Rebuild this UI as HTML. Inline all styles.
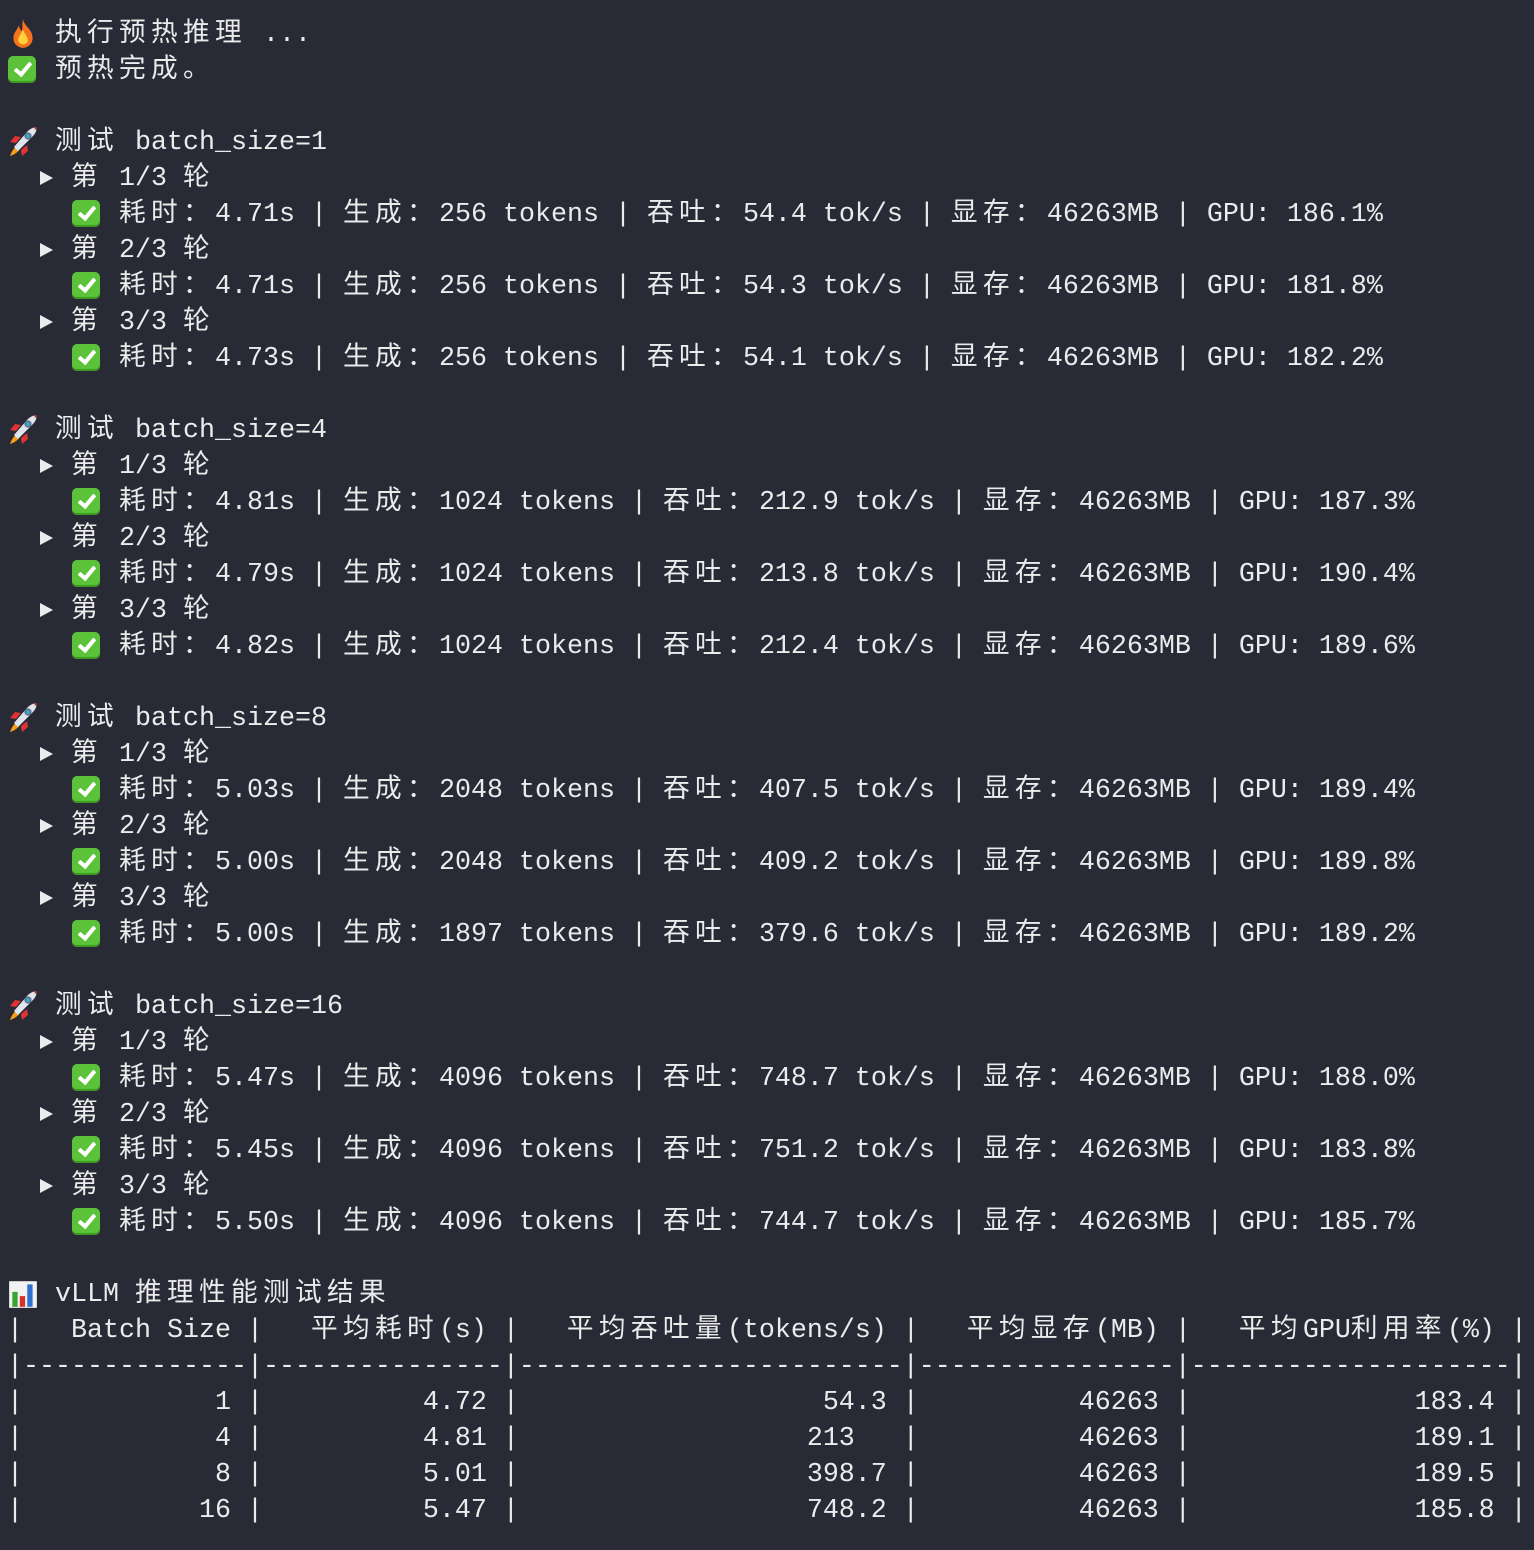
<!DOCTYPE html>
<html><head><meta charset="utf-8">
<style>
html,body{margin:0;padding:0;background:#282a36;width:1534px;height:1550px;overflow:hidden}
pre{margin:0;padding:17px 0 0 7px;font-family:"Liberation Mono","Noto Sans CJK SC",monospace;font-size:26.67px;line-height:36px;color:#ebebeb;white-space:pre}
.w{display:inline-block;width:32px;text-align:left;line-height:36px;vertical-align:top}
.e{display:inline-block;width:32px;height:36px;vertical-align:top;position:relative}
.e svg{position:absolute;left:1px;top:1px}
.ck{position:absolute;left:1px;top:3px;width:28px;height:27px;border-radius:5px;background:#5cc23a;box-shadow:inset 0 -2px 0 #3f9a25}
.ck:after{content:"";position:absolute;left:10px;top:3px;width:6px;height:13px;border:solid #fff;border-width:0 4px 4px 0;transform:rotate(40deg)}
.tri{display:inline-block;width:16px;height:36px;vertical-align:top;position:relative}
.tri:after{content:"";position:absolute;left:1px;top:10px;border-left:13px solid #ebebeb;border-top:7px solid transparent;border-bottom:7px solid transparent}
</style></head><body>
<pre id="t">🔥 执行预热推理 ...
✅ 预热完成。

🚀 测试 batch_size=1
  ▶ 第 1/3 轮
    ✅ 耗时：4.71s | 生成：256 tokens | 吞吐：54.4 tok/s | 显存：46263MB | GPU: 186.1%
  ▶ 第 2/3 轮
    ✅ 耗时：4.71s | 生成：256 tokens | 吞吐：54.3 tok/s | 显存：46263MB | GPU: 181.8%
  ▶ 第 3/3 轮
    ✅ 耗时：4.73s | 生成：256 tokens | 吞吐：54.1 tok/s | 显存：46263MB | GPU: 182.2%

🚀 测试 batch_size=4
  ▶ 第 1/3 轮
    ✅ 耗时：4.81s | 生成：1024 tokens | 吞吐：212.9 tok/s | 显存：46263MB | GPU: 187.3%
  ▶ 第 2/3 轮
    ✅ 耗时：4.79s | 生成：1024 tokens | 吞吐：213.8 tok/s | 显存：46263MB | GPU: 190.4%
  ▶ 第 3/3 轮
    ✅ 耗时：4.82s | 生成：1024 tokens | 吞吐：212.4 tok/s | 显存：46263MB | GPU: 189.6%

🚀 测试 batch_size=8
  ▶ 第 1/3 轮
    ✅ 耗时：5.03s | 生成：2048 tokens | 吞吐：407.5 tok/s | 显存：46263MB | GPU: 189.4%
  ▶ 第 2/3 轮
    ✅ 耗时：5.00s | 生成：2048 tokens | 吞吐：409.2 tok/s | 显存：46263MB | GPU: 189.8%
  ▶ 第 3/3 轮
    ✅ 耗时：5.00s | 生成：1897 tokens | 吞吐：379.6 tok/s | 显存：46263MB | GPU: 189.2%

🚀 测试 batch_size=16
  ▶ 第 1/3 轮
    ✅ 耗时：5.47s | 生成：4096 tokens | 吞吐：748.7 tok/s | 显存：46263MB | GPU: 188.0%
  ▶ 第 2/3 轮
    ✅ 耗时：5.45s | 生成：4096 tokens | 吞吐：751.2 tok/s | 显存：46263MB | GPU: 183.8%
  ▶ 第 3/3 轮
    ✅ 耗时：5.50s | 生成：4096 tokens | 吞吐：744.7 tok/s | 显存：46263MB | GPU: 185.7%

📊 vLLM 推理性能测试结果
|   Batch Size |   平均耗时(s) |   平均吞吐量(tokens/s) |   平均显存(MB) |   平均GPU利用率(%) |
|--------------|---------------|------------------------|----------------|--------------------|
|            1 |          4.72 |                   54.3 |          46263 |              183.4 |
|            4 |          4.81 |                  213   |          46263 |              189.1 |
|            8 |          5.01 |                  398.7 |          46263 |              189.5 |
|           16 |          5.47 |                  748.2 |          46263 |              185.8 |</pre>
<script>
(function(){
var pre=document.getElementById('t');var s=pre.textContent;var out='';
var fire='<span class="e"><svg width="30" height="32" viewBox="0 0 28 30"><path d="M14 1C15 8 23 10 23 19A9 9 0 0 1 5 19C5 13 9 11 10 7C11 10 12 12 13 12C14 9 13 5 14 1Z" fill="#f5731f"/><path d="M14 11C15 15 19 17 18.5 22A4.8 4.8 0 0 1 9.5 21C9.5 18 12 15 14 11Z" fill="#ffd23c"/></svg></span>';
var rocket='<span class="e"><svg width="30" height="32" viewBox="0 0 30 32"><path d="M8 17L2 16L7 10L13 11Z" fill="#d33"/><path d="M13 24L14 30L20 25L19 19Z" fill="#d33"/><path d="M8 21C5 23 3 27 2 30C5 29 9 27 11 24Z" fill="#f7a11a"/><path d="M6 21L10 25L24 11C28 7 29 4 28 2C26 1 23 2 19 6Z" fill="#dfe5ea"/><circle cx="20" cy="10" r="3" fill="#3aa0d8" stroke="#666" stroke-width="1.2"/><path d="M26 2L28 4L29 1Z" fill="#d33"/></svg></span>';
var chart='<span class="e"><svg width="30" height="32" viewBox="0 0 28 30"><rect x="1" y="3" width="26" height="25" fill="#f2f2f2"/><rect x="4" y="13" width="5" height="14" fill="#3aa335"/><rect x="11" y="17" width="5" height="10" fill="#d8302a"/><rect x="18" y="6" width="5" height="21" fill="#2f6fd0"/></svg></span>';
for(var ch of s){
 if(ch==='\uFE0F')continue;
 if(ch==='🔥')out+=fire;
 else if(ch==='🚀')out+=rocket;
 else if(ch==='📊')out+=chart;
 else if(ch==='✅')out+='<span class="e"><span class="ck"></span></span>';
 else if(ch==='▶')out+='<span class="tri"></span>';
 else if(/[\u3000-\u9fff\uff00-\uffef]/.test(ch))out+='<span class="w">'+ch+'</span>';
 else if(ch==='<')out+='&lt;';else if(ch==='&')out+='&amp;';
 else out+=ch;
}
pre.innerHTML=out;
})();
</script>
</body></html>
